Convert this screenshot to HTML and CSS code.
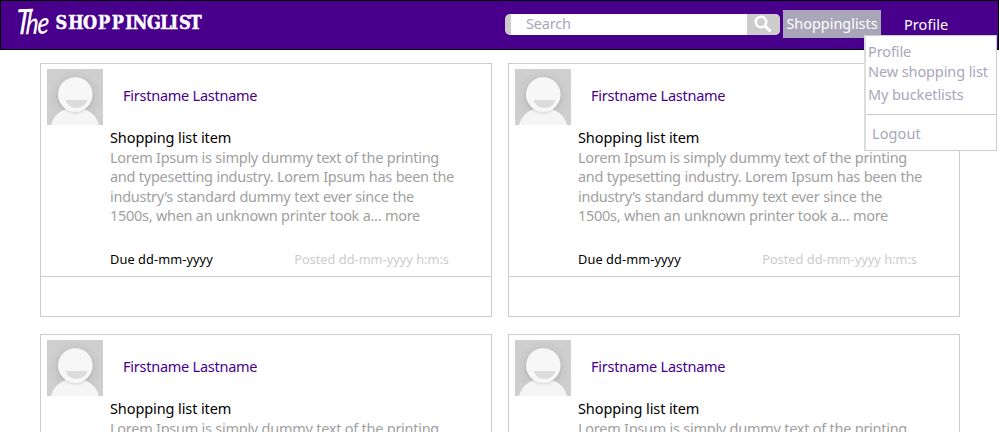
FILE: index.html
```html
<!DOCTYPE html>
<html lang="en">
<head>
<meta charset="utf-8">
<title>The Shoppinglist</title>
<link rel="stylesheet" href="styles.css">
</head>
<body>
<svg class="defs" width="0" height="0" aria-hidden="true">
  <defs>
    <radialGradient id="bg"><stop offset=".5" stop-color="#c4c4c4"/><stop offset="1" stop-color="#cfcfcf"/></radialGradient>
    <filter id="soft" x="-30%" y="-30%" width="160%" height="160%"><feDropShadow dx="0" dy="1" stdDeviation="1.5" flood-color="#000" flood-opacity=".16"/></filter>
    <symbol id="avatar" viewBox="0 0 56 56">
      <rect width="56" height="56" fill="url(#bg)"/>
      <path d="M4 56C7 45 15 39 28 39s21 6 24 17z" fill="#f5f5f5"/>
      <circle cx="28.3" cy="25.5" r="17.3" fill="#f7f7f7" filter="url(#soft)"/>
      <path d="M18.5 31h22c-1.500 5-6 8-11 8s-9.500-3-11-8z" fill="#dcdcdc"/>
    </symbol>
  </defs>
</svg>
<header class="header">
  <svg class="logo" width="190" height="40" viewBox="0 0 190 40" role="img">
    <text class="logo-the" transform="translate(-1 33.500) rotate(-2) skewX(-6) scale(1 1.250)"><tspan class="logo-t">T</tspan><tspan dx="-4">he</tspan></text>
    <text class="logo-name" x="39.500 52.300 67 82 95.800 109.300 116.500 131 144.300 154.500 163 173.500" y="27.700">SHOPPINGLIST</text>
    <path class="logo-cuts" d="M74 13v16M88 13v16M102 13v16M137.500 13v16"/>
  </svg>
  <div class="search">
    <span class="search-text">Search</span>
    <span class="search-button"><svg width="20" height="20" viewBox="0 0 20 20"><circle cx="8" cy="8" r="5.200" fill="none" stroke="#fff" stroke-width="2.600"/><path d="M11.500 11.500l6 6" stroke="#fff" stroke-width="3"/></svg></span>
  </div>
  <nav class="nav">
    <a class="nav-item active">Shoppinglists</a>
    <a class="nav-item profile">Profile</a>
  </nav>
  <div class="menu">
    <div class="menu-links"><a>Profile</a><a class="wide">New shopping list</a><a class="last">My bucketlists</a></div>
    <a class="logout">Logout</a>
  </div>
</header>
<main class="grid">
  <article class="card">
    <div class="user"><svg class="avatar"><use href="#avatar"/></svg><a class="name">Firstname Lastname</a></div>
    <div class="body"><h2>Shopping list item</h2>
      <p><span class="l1">Lorem Ipsum is simply dummy text of the printing</span><span class="l2">and typesetting industry. Lorem Ipsum has been the</span><span class="l3">industry’s standard dummy text ever since the</span><span class="l4">1500s, when an unknown printer took a... more</span></p>
      <div class="dates"><span class="due">Due dd-mm-yyyy</span><span class="posted">Posted dd-mm-yyyy h:m:s</span></div></div>
    <footer class="foot"></footer>
  </article>
  <article class="card">
    <div class="user"><svg class="avatar"><use href="#avatar"/></svg><a class="name">Firstname Lastname</a></div>
    <div class="body"><h2>Shopping list item</h2>
      <p><span class="l1">Lorem Ipsum is simply dummy text of the printing</span><span class="l2">and typesetting industry. Lorem Ipsum has been the</span><span class="l3">industry’s standard dummy text ever since the</span><span class="l4">1500s, when an unknown printer took a... more</span></p>
      <div class="dates"><span class="due">Due dd-mm-yyyy</span><span class="posted">Posted dd-mm-yyyy h:m:s</span></div></div>
    <footer class="foot"></footer>
  </article>
  <article class="card">
    <div class="user"><svg class="avatar"><use href="#avatar"/></svg><a class="name">Firstname Lastname</a></div>
    <div class="body"><h2>Shopping list item</h2>
      <p><span class="l1">Lorem Ipsum is simply dummy text of the printing</span></p></div>
  </article>
  <article class="card">
    <div class="user"><svg class="avatar"><use href="#avatar"/></svg><a class="name">Firstname Lastname</a></div>
    <div class="body"><h2>Shopping list item</h2>
      <p><span class="l1">Lorem Ipsum is simply dummy text of the printing</span></p></div>
  </article>
</main>
</body>
</html>
```
FILE: styles.css
```css
* { box-sizing: border-box; }
html, body { height: 432px; overflow: hidden; }
body { margin: 0; background: #fff; color: #000; font: 14.5px/20px "Noto Sans", sans-serif; letter-spacing: -.2px; }
.defs { position: absolute; }
.header { position: relative; display: flex; align-items: flex-start; height: 50px; background: #48008c; border: 1px solid #000; }
.logo { margin-left: 15px; fill: #fff; overflow: visible; }
.logo-the { font: italic 500 24px "Lato", sans-serif; letter-spacing: -1px; }
.logo-t { font-size: 28px; }
.logo-name { font: bold 18px "DejaVu Serif Condensed", "DejaVu Serif", serif; font-stretch: condensed; letter-spacing: 0; stroke: #fff; stroke-width: .5px; }
.logo-cuts { stroke: #48008c; stroke-width: .8px; opacity: .6; }
.search { display: flex; width: 275px; height: 21px; margin: 13px 0 0 299px; background: #fff; border-left: 6px solid #ccc; border-radius: 5px; overflow: hidden; }
.search-text { flex: 1; padding-left: 15px; color: #a9a6b9; line-height: 19px; }
.search-button { width: 33px; padding-left: 6px; background: #ccc; }
.search-button svg { display: block; }
.nav { display: flex; margin: 9px 0 0 3px; color: #fff; }
.nav-item { height: 28px; line-height: 27px; white-space: nowrap; }
.active { width: 98px; background: #a9a6b9; text-align: center; letter-spacing: -.05px; }
.profile { margin-left: 23px; line-height: 28px; letter-spacing: .05px; }
.menu { position: absolute; left: 863px; top: 34px; z-index: 2; width: 133px; height: 116px; background: #fff; border: 1px solid #ccc; border-left: 2px solid #ddd; color: #a9a6b9; white-space: nowrap; letter-spacing: -.1px; }
.menu-links { display: flex; flex-direction: column; height: 79px; padding: 5px 0 0 2px; border-bottom: 1px solid #ccc; }
.menu-links .last { margin-top: 3px; }
.logout { display: block; padding: 8px 0 0 6px; letter-spacing: .1px; }
.grid { display: grid; grid-template-columns: 452px 452px; grid-auto-rows: 254px; gap: 17px 16px; height: 382px; overflow: hidden; padding: 13px 0 0 40px; }
.card { display: flex; flex-direction: column; border: 1px solid #ccc; }
.user { display: flex; height: 61px; padding: 5px 0 0 6px; }
.avatar { width: 56px; height: 56px; }
.name { margin: 16px 0 0 20px; color: #48008c; letter-spacing: -.25px; }
.body { height: 151px; padding-left: 69px; }
h2 { margin: 2px 0 0; font-size: inherit; font-weight: 400; line-height: 20px; letter-spacing: -.1px; }
p { margin: 1px 0 0; color: #9f9f9f; line-height: 19.4px; letter-spacing: -.28px; }
p span { display: block; text-align: justify; text-align-last: justify; white-space: nowrap; }
.l1 { width: 329px; }
.l2 { width: 344px; }
.l3 { width: 304px; }
.l4 { width: 310px; }
.dates { display: flex; justify-content: space-between; width: 339px; margin-top: 23.4px; font-size: 12.8px; line-height: 20px; letter-spacing: 0; }
.due { letter-spacing: .07px; }
.posted { color: #ccc; }
.foot { flex: 1; border-top: 1px solid #ccc; }
```
